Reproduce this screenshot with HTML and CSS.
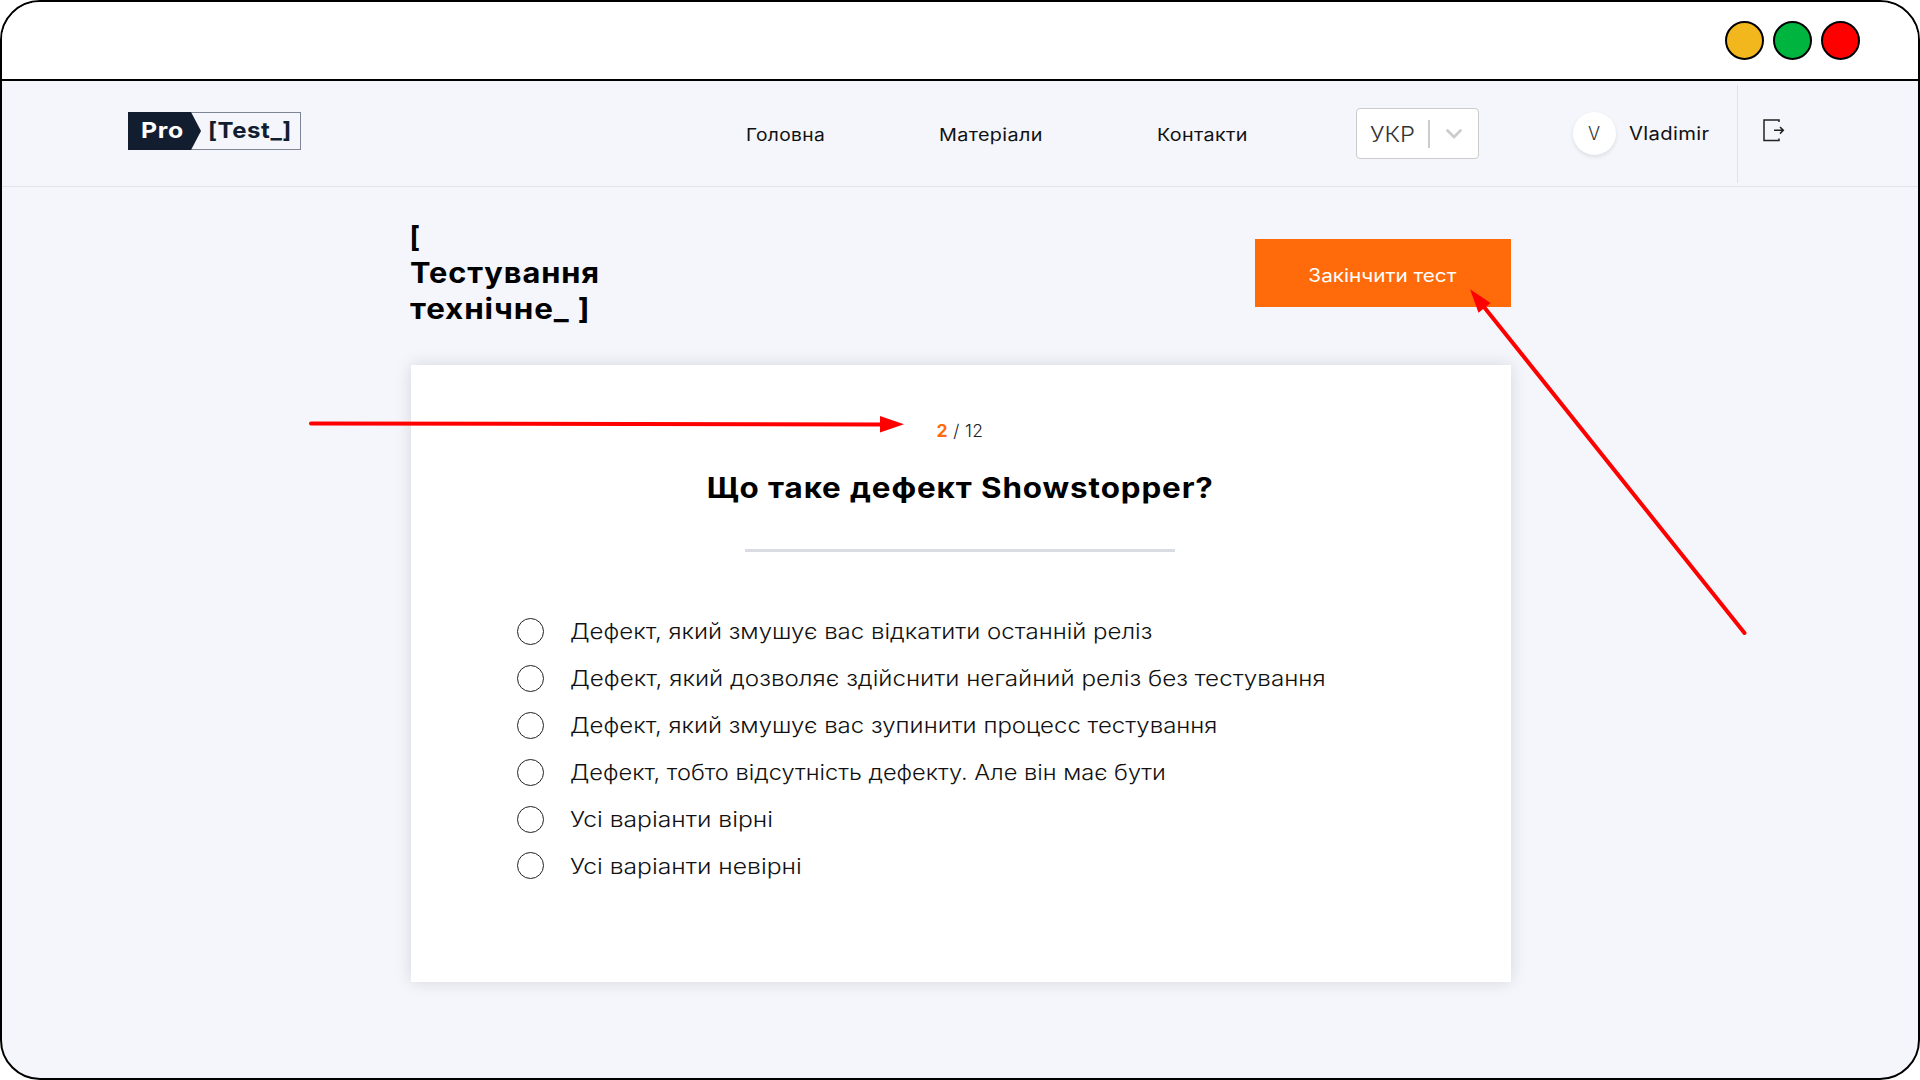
FILE: index.html
```html
<!DOCTYPE html>
<html lang="uk">
<head>
<meta charset="utf-8">
<title>Pro [Test_]</title>
<link rel="stylesheet" href="styles.css">
</head>
<body>
<div class="window">
  <div class="titlebar">
    <span class="dot dot-yellow"></span>
    <span class="dot dot-green"></span>
    <span class="dot dot-red"></span>
  </div>
  <header class="header">
    <a class="logo"><span class="logo-pro"><span class="stretch logo-pro-text">Pro</span></span><span class="stretch logo-test">[Test_]</span></a>
    <nav class="nav">
      <a class="stretch nav-home">Головна</a>
      <a class="stretch nav-materials">Матеріали</a>
      <a class="stretch nav-contacts">Контакти</a>
    </nav>
    <div class="select">
      <span class="stretch select-value">УКР</span>
      <span class="select-sep"></span>
      <svg class="chevron" width="18" height="12" viewBox="0 0 18 12"><path d="M2.500 2.500 9 9l6.500-6.500" fill="none" stroke="#ccc" stroke-width="2.8" stroke-linecap="round"/></svg>
    </div>
    <div class="user">
      <span class="avatar">V</span>
      <span class="stretch user-name">Vladimir</span>
    </div>
    <div class="logout">
      <svg width="24" height="24" viewBox="0 0 24 24" fill="none" stroke="#222" stroke-width="1.5"><path d="M17 4V2H2v20.500h15v-2M12 12.300h9M18 9l3.300 3.300-3.300 3.300"/></svg>
    </div>
  </header>
  <main class="main">
    <div class="top">
      <h1 class="heading">[<br><span class="stretch heading-first">Тестування</span><br><span class="stretch heading-second">технічне_ ]</span></h1>
      <button class="finish"><span class="stretch finish-text">Закінчити тест</span></button>
    </div>
    <section class="card">
      <p class="counter"><b>2</b> / 12</p>
      <h2 class="question"><span class="stretch question-text">Що таке дефект Showstopper?</span></h2>
      <div class="rule"></div>
      <ul class="options">
        <li><i class="radio"></i><span class="stretch option">Дефект, який змушує вас відкатити останній реліз</span></li>
        <li><i class="radio"></i><span class="stretch option wide">Дефект, який дозволяє здійснити негайний реліз без тестування</span></li>
        <li><i class="radio"></i><span class="stretch option">Дефект, який змушує вас зупинити процесс тестування</span></li>
        <li><i class="radio"></i><span class="stretch option tight">Дефект, тобто відсутність дефекту. Але він має бути</span></li>
        <li><i class="radio"></i><span class="stretch option short">Усі варіанти вірні</span></li>
        <li><i class="radio"></i><span class="stretch option short">Усі варіанти невірні</span></li>
      </ul>
    </section>
  </main>
  <svg class="arrows" width="1920" height="1080" viewBox="0 0 1920 1080">
    <g stroke="#f00" stroke-width="4" stroke-linecap="round"><path d="M311 423.500 882 424.500"/><path d="M1744.500 633 1484 307"/></g>
    <g fill="#f00"><path d="M880 416v16.500l24-8.200z"/><path d="M1470 289.300 1490.600 303 1478.500 312.700z"/></g>
  </svg>
</div>
</body>
</html>
```
FILE: styles.css
```css
* { box-sizing: border-box; }
body { margin: 0; background: #fff; font-family: Inter, "Noto Sans", sans-serif; color: #000; }
.window { position: relative; width: 1920px; height: 1080px; border: 2px solid #000; border-radius: 40px; background: #f4f6fb; overflow: hidden; display: flex; flex-direction: column; }

/* wide letterforms */
.stretch { display: inline-block; transform: scaleX(var(--sx)); transform-origin: 0 50%; white-space: nowrap; }

.titlebar { height: 79px; border-bottom: 2px solid #000; background: #fff; display: flex; justify-content: flex-end; align-items: center; gap: 9px; padding-right: 58px; flex: none; }
.dot { width: 39px; height: 39px; border: 2px solid #000; border-radius: 50%; }
.dot-yellow { background: #f1b71c; }
.dot-green { background: #00b53f; }
.dot-red { background: #f00; }

.header { height: 106px; flex: none; border-bottom: 1px solid #e1e3e8; display: flex; align-items: flex-start; padding-left: 126px; }
.logo { display: flex; width: 173px; height: 38px; margin-top: 31px; border: 1px solid #7e8696; color: #121e2f; font-weight: 700; font-size: 22px; line-height: 34px; }
.logo-pro { flex: none; width: 73px; margin: -1px 7px -1px -1px; padding: 1px 0 0 13px; background: #121e2f; color: #fff; clip-path: polygon(0 0, 63px 0, 100% 50%, 63px 100%, 0 100%); }
.logo-pro-text { letter-spacing: .6px; --sx: 1.130; }
.logo-test { letter-spacing: .5px; --sx: 1.090; }
.nav { display: grid; grid-template-columns: 193px 218px 199.500px; justify-items: start; margin: 42px 0 0 444.500px; font-size: 17px; line-height: 24px; font-weight: 400; letter-spacing: .3px; color: #111; }
.nav-home { --sx: 1.130; }
.nav-materials { --sx: 1.165; }
.nav-contacts { --sx: 1.160; }
.select { display: flex; align-items: center; width: 123px; height: 51px; margin: 27px 0 0; padding-left: 13px; border: 1px solid #ccc; border-radius: 4px; background: #fff; font-size: 22px; font-weight: 300; color: #333; }
.select-value { width: 58px; --sx: 1.080; }
.select-sep { width: 1.500px; height: 28px; background: #ccc; margin-right: 15px; }
.user { display: flex; align-items: center; margin: 31px 0 0 93.500px; width: 164.500px; }
.avatar { width: 43px; height: 43px; border-radius: 50%; background: #fff; box-shadow: 0 2px 4px rgba(0,0,0,.1); text-align: center; font-size: 18px; line-height: 43px; font-weight: 300; color: #333; margin-right: 13px; }
.user-name { font-size: 18px; font-weight: 400; letter-spacing: .3px; color: #111; --sx: 1.125; }
.logout { height: 98px; margin-top: 4px; border-left: 1px solid #e0e2e6; padding: 33px 0 0 24px; }

.main { width: 1100px; margin: 0 0 0 408.500px; }
.top { display: flex; justify-content: space-between; height: 178px; padding-top: 32px; }
.heading { margin: 0 0 0 -1px; font-size: 28px; line-height: 36px; font-weight: 680; letter-spacing: .8px; white-space: nowrap; }
.heading-first { --sx: 1.100; }
.heading-second { --sx: 1.120; }
.finish { width: 256px; height: 68px; margin-top: 20px; padding: 4px 0 0; border: 0; background: #ff6b0b; color: #fff; font: 400 18px Inter, "Noto Sans", sans-serif; }
.finish-text { transform-origin: 50% 50%; --sx: 1.150; }

.card { height: 617px; background: #fff; box-shadow: 0 0 16px rgba(0,0,0,.13); overflow: hidden; text-align: center; }
.counter { margin: 54px 1px 0 0; font-size: 17.500px; line-height: 24px; font-weight: 300; letter-spacing: .4px; color: #222; }
.counter b { color: #ff6b0b; font-weight: 700; }
.question { margin: 27px 0 0; font-size: 28px; line-height: 36px; font-weight: 680; letter-spacing: .8px; }
.question-text { transform-origin: 50% 50%; --sx: 1.120; }
.rule { width: 430px; height: 3px; margin: 43px 0 0 334px; background: #d9dce1; }
.options { list-style: none; margin: 56px 0 0; padding: 0 0 0 106px; text-align: left; font-size: 22px; font-weight: 300; color: #111; }
.options li { display: flex; align-items: center; height: 46.900px; white-space: nowrap; }
.option { --sx: 1.092; }
.option.wide { --sx: 1.101; }
.option.tight { --sx: 1.074; }
.option.short { --sx: 1.123; }
.radio { width: 27px; height: 27px; border: 1.500px solid #222; border-radius: 50%; margin-right: 26px; }

.arrows { position: absolute; left: -2px; top: -2px; }
```
